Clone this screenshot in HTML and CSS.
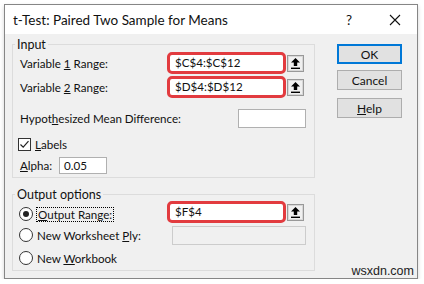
FILE: index.html
```html
<!DOCTYPE html>
<html lang="en">

<head>
    <meta charset="utf-8">
    <meta name="viewport" content="width=device-width, initial-scale=1.0">

    <title>t-Test</title>

    <link rel="stylesheet" href="styles.css">

</head>

<body>
    <div class="dialog">
        <div class="titlebar">
            <span class="title">t-Test: Paired Two Sample for Means</span>
            <span class="qmark">?</span>
            <svg class="close" width="12" height="12" viewBox="0 0 12 12">
                <path d="M1 1 L11 11 M11 1 L1 11" stroke="#111" stroke-width="1.1" fill="none" />
            </svg>
        </div>

        <div class="content">
            <div class="left">
                <fieldset class="group group-input">
                    <legend>Input</legend>

                    <div class="row r1">
                        <span class="label">Variable <u>1</u> Range:</span>
                        <div class="range">$C$4:$C$12</div>
                        <span class="pick"><svg width="9" height="11" viewBox="0 0 9 11"><path d="M4.5 0 L9 4.6 H6.2 V8 H2.8 V4.6 H0 Z" fill="#000" /><rect x="0" y="9.6" width="9" height="1.4" fill="#000" /></svg></span>
                    </div>

                    <div class="row r2">
                        <span class="label">Variable <u>2</u> Range:</span>
                        <div class="range">$D$4:$D$12</div>
                        <span class="pick"><svg width="9" height="11" viewBox="0 0 9 11"><path d="M4.5 0 L9 4.6 H6.2 V8 H2.8 V4.6 H0 Z" fill="#000" /><rect x="0" y="9.6" width="9" height="1.4" fill="#000" /></svg></span>
                    </div>

                    <div class="row r3">
                        <span class="label">Hypot<u>h</u>esized Mean Difference:</span>
                        <div class="field hypo"></div>
                    </div>

                    <div class="row r4">
                        <span class="check"><svg width="13" height="13" viewBox="0 0 13 13"><rect x="0.5" y="0.5" width="12" height="12" fill="#fff" stroke="#333" /><path d="M2.5 6.5 L5.2 9.2 L10.5 3.2" stroke="#222" stroke-width="1.2" fill="none" /></svg></span>
                        <span class="label"><u>L</u>abels</span>
                    </div>

                    <div class="row r5">
                        <span class="label alpha-label"><u>A</u>lpha:</span>
                        <div class="field alpha">0.05</div>
                    </div>
                </fieldset>

                <fieldset class="group group-output">
                    <legend>Output options</legend>

                    <div class="row o1">
                        <span class="radio on"></span>
                        <span class="label"><span class="focus"><u>O</u>utput Range:</span></span>
                        <div class="range">$F$4</div>
                        <span class="pick"><svg width="9" height="11" viewBox="0 0 9 11"><path d="M4.5 0 L9 4.6 H6.2 V8 H2.8 V4.6 H0 Z" fill="#000" /><rect x="0" y="9.6" width="9" height="1.4" fill="#000" /></svg></span>
                    </div>

                    <div class="row o2">
                        <span class="radio"></span>
                        <span class="label">New Worksheet <u>P</u>ly:</span>
                        <div class="field disabled"></div>
                    </div>

                    <div class="row o3">
                        <span class="radio"></span>
                        <span class="label">New <u>W</u>orkbook</span>
                    </div>
                </fieldset>
            </div>

            <div class="buttons">
                <button class="btn ok">OK</button>
                <button class="btn cancel">Cancel</button>
                <button class="btn help"><u>H</u>elp</button>
            </div>
        </div>

        <div class="watermark">wsxdn.com</div>
    </div>
</body>

</html>
```

FILE: styles.css
```css
* {
    box-sizing: border-box;
}

body {
    margin: 0;
    background: #fff;
    font-family: Lato, "Noto Sans", sans-serif;
    font-size: 11.6px;
    color: #111;
}

.dialog {
    position: relative;
    width: 414px;
    height: 275px;
    margin: 4px 0 0 4px;
    border: 1px solid #868686;
    background: #f0f0f0;
    box-shadow: 0 2px 4px rgba(0, 0, 0, 0.18);
}

.titlebar {
    display: flex;
    align-items: center;
    height: 29px;
    background: #fff;
    padding-left: 8px;
}

.title {
    flex: 1;
    font-size: 13.5px;
}

.qmark {
    font-size: 13.5px;
    margin-right: 37px;
}

.close {
    margin-right: 16px;
}

.content {
    display: flex;
    padding: 2px 0 0 7px;
}

.left {
    width: 303px;
}

.group {
    margin: 0;
    padding: 0 10px 1px 7px;
    border: 1px solid #dcdcdc;
}

.group legend {
    padding: 0 2px;
    margin-left: -5px;
    line-height: 17px;
    font-size: 12.5px;
}

.group-output {
    margin-top: 8px;
}

.row {
    display: flex;
    align-items: center;
    height: 22px;
}

.label {
    flex: 1;
    white-space: nowrap;
}

.r1 {
    margin-top: -1px;
}

.r2 {
    margin-top: 2px;
}

.r3 {
    margin-top: 9px;
}

.r4 {
    margin-top: 6px;
    height: 18px;
}

.r5 {
    margin-top: 1px;
}

.o1 {
    margin-top: -2px;
}

.o2,
.o3 {
    margin-top: 1px;
}

.range {
    width: 119px;
    height: 22px;
    border: 3px solid #e23b3f;
    border-radius: 5px;
    background: #fff;
    padding-left: 5px;
    line-height: 16px;
}

.pick {
    display: flex;
    align-items: center;
    justify-content: center;
    width: 17px;
    height: 17px;
    margin-left: 1px;
    border: 1px solid #999;
    box-shadow: inset 0 0 0 1px #d8d8d8;
    background: #f0f0f0;
}

.field {
    height: 19px;
    border: 1px solid #b0b0b0;
    background: #fff;
}

.hypo {
    width: 68px;
    margin-right: -2px;
}

.check {
    display: flex;
    margin-left: -2px;
    margin-right: 4px;
}

.alpha-label {
    flex: none;
    width: 39px;
}

.alpha {
    width: 48px;
    height: 17px;
    padding-left: 4px;
    line-height: 15px;
}

.radio {
    width: 14px;
    height: 14px;
    margin-left: -1px;
    margin-right: 4px;
    border: 1px solid #333;
    border-radius: 50%;
    background: #fff;
    position: relative;
    top: 2px;
}

.radio.on::after {
    content: "";
    position: absolute;
    left: 3px;
    top: 3px;
    width: 6px;
    height: 6px;
    border-radius: 50%;
    background: #222;
}

.o2 .radio,
.o3 .radio {
    top: 0;
}

.o1 .label {
    padding-top: 4px;
}

.focus {
    outline: 1px dotted #000;
    outline-offset: 0;
    padding: 0 1px;
}

.disabled {
    width: 134px;
    margin-right: -2px;
    border-color: #cccccc;
    background: #f0f0f0;
}

.buttons {
    display: flex;
    flex-direction: column;
    margin-left: 22px;
    padding-top: 8px;
}

.btn {
    width: 65px;
    height: 20px;
    padding: 0;
    border: 1px solid #adadad;
    background: #e1e1e1;
    font-family: inherit;
    font-size: 12px;
    color: #111;
}

.ok {
    border: 2px solid #0078d7;
}

.cancel {
    margin-top: 6px;
}

.help {
    margin-top: 8px;
}

.watermark {
    position: absolute;
    right: 3px;
    bottom: 0;
    font-family: "Liberation Sans", Arial, sans-serif;
    font-size: 12.5px;
    line-height: 14px;
    color: #222;
}
```
